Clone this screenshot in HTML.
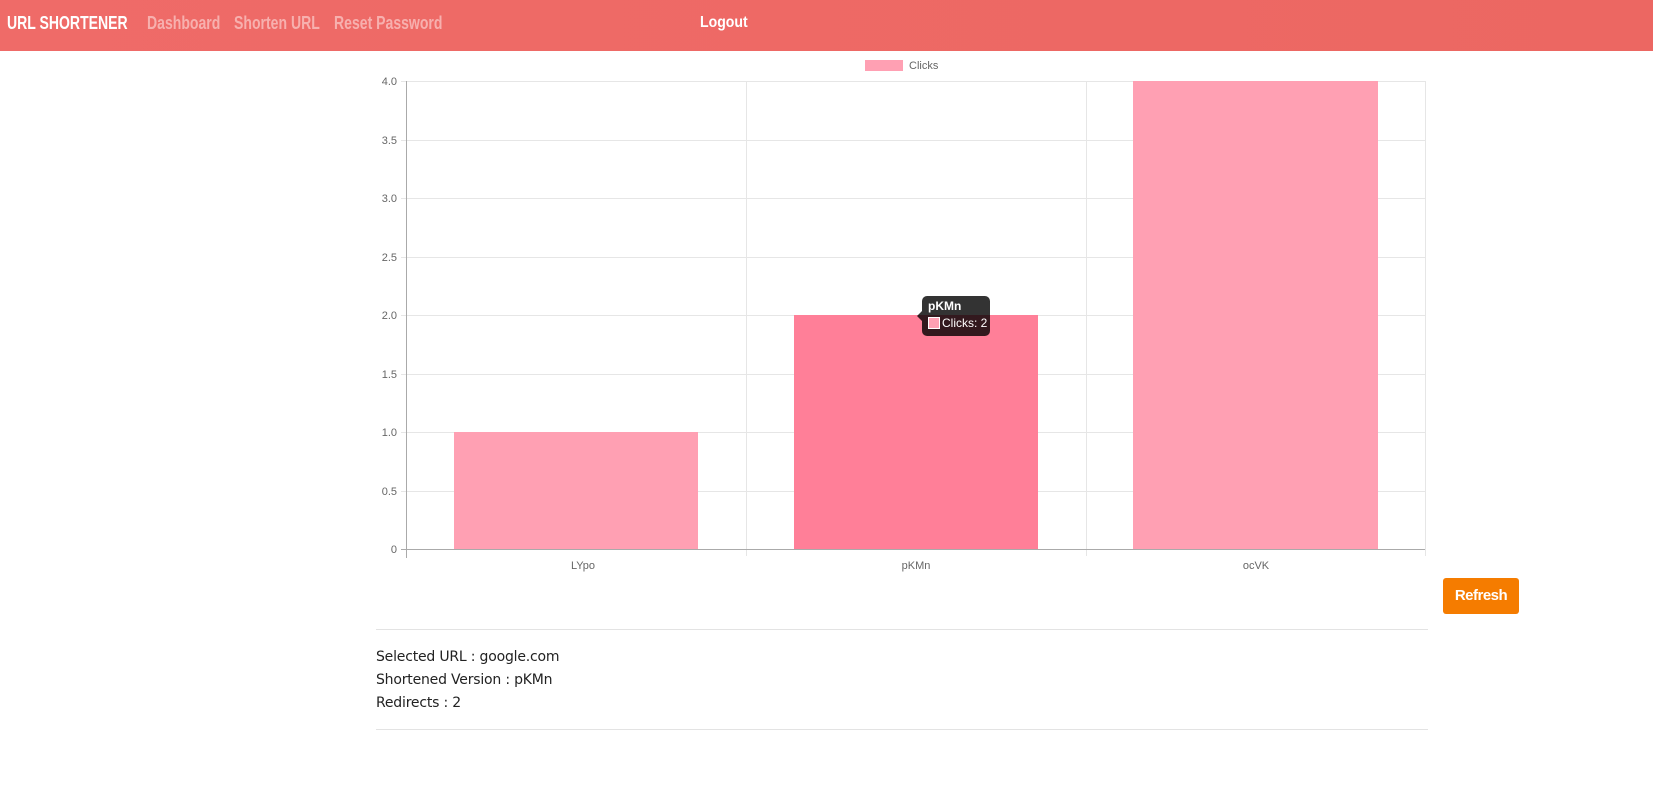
<!DOCTYPE html>
<html><head><meta charset="utf-8"><style>
body{margin:0;width:1653px;height:805px;background:#fff;font-family:"Liberation Sans",sans-serif;position:relative;overflow:hidden}
.nav{position:absolute;left:0;top:0;width:1653px;height:51px;background:linear-gradient(90deg,#ef6b68,#ec6762)}
.nav span{position:absolute;top:13px;font-family:"Liberation Sans",sans-serif;font-size:18px;font-weight:bold;transform:scaleX(0.78);transform-origin:0 0;white-space:nowrap}
.t{position:absolute;left:376px;font-size:14px;color:#222;font-family:"DejaVu Sans","Liberation Sans",sans-serif;letter-spacing:-0.2px}
.hr{position:absolute;left:376px;width:1052px;height:1px;background:#e3e3e3}
.btn{position:absolute;left:1443px;top:578px;width:76px;height:36px;background:#f57c00;border-radius:3px;color:#fff;font-weight:bold;font-size:15px;line-height:36px;text-align:center;letter-spacing:-0.5px}
</style></head><body>
<div class="nav">
<span style="left:7px;color:#fff">URL SHORTENER</span>
<span style="left:147px;color:#f7b0ae">Dashboard</span>
<span style="left:234px;color:#f7b0ae">Shorten URL</span>
<span style="left:334px;color:#f7b0ae">Reset Password</span>
<span style="left:700px;color:#fff;font-size:16px;top:14px;transform:scaleX(0.88)">Logout</span>
</div>
<svg style="position:absolute;left:0;top:0" width="1653" height="620" font-family="Liberation Sans,sans-serif" font-size="11" fill="#666">
<rect x="865" y="60" width="38" height="11" fill="#ffa0b3"/>
<text x="909" y="69" font-size="11">Clicks</text>
<g stroke="#e6e6e6" stroke-width="1">
<line x1="406" y1="81.5" x2="1425" y2="81.5"/><line x1="406" y1="140.5" x2="1425" y2="140.5"/>
<line x1="406" y1="198.5" x2="1425" y2="198.5"/><line x1="406" y1="257.5" x2="1425" y2="257.5"/>
<line x1="406" y1="315.5" x2="1425" y2="315.5"/><line x1="406" y1="374.5" x2="1425" y2="374.5"/>
<line x1="406" y1="432.5" x2="1425" y2="432.5"/><line x1="406" y1="491.5" x2="1425" y2="491.5"/>
<line x1="746.5" y1="81" x2="746.5" y2="556"/><line x1="1086.5" y1="81" x2="1086.5" y2="556"/><line x1="1425.5" y1="81" x2="1425.5" y2="556"/>
<line x1="401" y1="81.5" x2="406" y2="81.5"/><line x1="401" y1="140.5" x2="406" y2="140.5"/><line x1="401" y1="198.5" x2="406" y2="198.5"/><line x1="401" y1="257.5" x2="406" y2="257.5"/><line x1="401" y1="315.5" x2="406" y2="315.5"/><line x1="401" y1="374.5" x2="406" y2="374.5"/><line x1="401" y1="432.5" x2="406" y2="432.5"/><line x1="401" y1="491.5" x2="406" y2="491.5"/>
</g>
<rect x="454" y="432" width="244" height="117" fill="#ffa0b3"/>
<rect x="794" y="315" width="244" height="234" fill="#ff7f98"/>
<rect x="1133" y="81" width="245" height="468" fill="#ffa0b3"/>
<g stroke="#aaa"><line x1="406.5" y1="81" x2="406.5" y2="558"/><line x1="401" y1="549.5" x2="1425" y2="549.5"/></g>
<g text-anchor="end">
<text x="397" y="85">4.0</text><text x="397" y="144">3.5</text><text x="397" y="202">3.0</text><text x="397" y="261">2.5</text><text x="397" y="319">2.0</text><text x="397" y="378">1.5</text><text x="397" y="436">1.0</text><text x="397" y="495">0.5</text><text x="397" y="553">0</text>
</g>
<g text-anchor="middle"><text x="583" y="569">LYpo</text><text x="916" y="569">pKMn</text><text x="1256" y="569">ocVK</text></g>
<path d="M927 296h58a5 5 0 0 1 5 5v30a5 5 0 0 1-5 5h-58a5 5 0 0 1-5-5v-10l-5-5 5-5v-10a5 5 0 0 1 5-5z" fill="rgba(0,0,0,0.8)"/>
<text x="928" y="310" fill="#fff" font-weight="bold" font-size="12">pKMn</text>
<rect x="928.5" y="317.5" width="11" height="11" fill="#ffa0b3" stroke="#fff"/>
<text x="942" y="327" fill="#fff" font-size="12">Clicks: 2</text>
</svg>
<div class="btn">Refresh</div>
<div class="hr" style="top:629px"></div>
<div class="t" style="top:649px">Selected URL : google.com</div>
<div class="t" style="top:672px">Shortened Version : pKMn</div>
<div class="t" style="top:695px">Redirects : 2</div>
<div class="hr" style="top:729px"></div>
</body></html>
